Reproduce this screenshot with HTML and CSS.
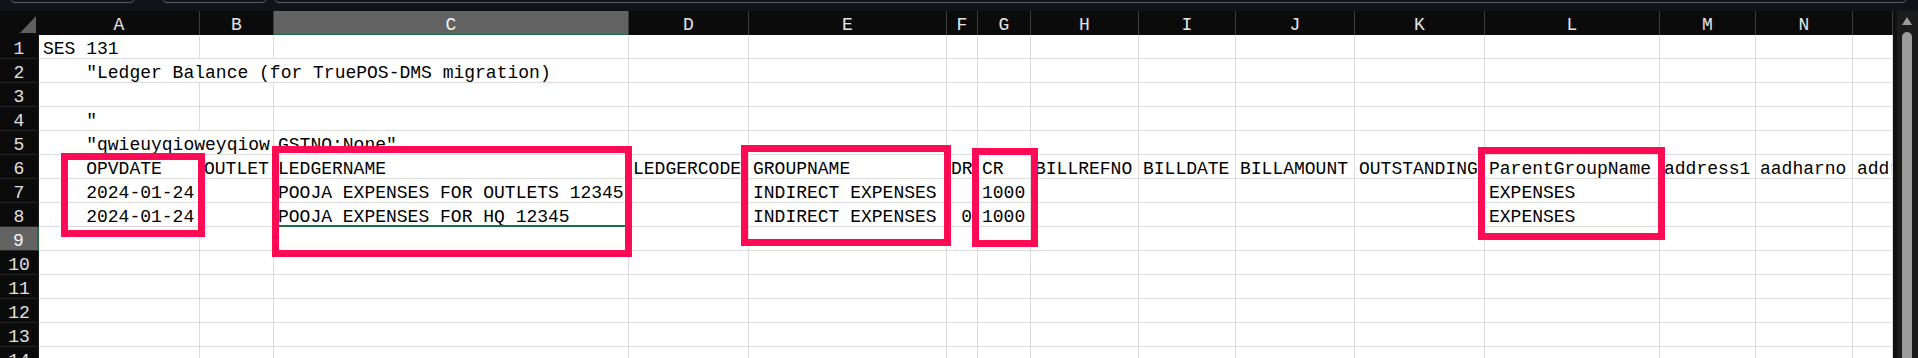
FILE: index.html
```
<!DOCTYPE html>
<html>
<head>
<meta charset="utf-8">
<link rel="stylesheet" href="styles.css">
</head>
<body>
<div class="topbar">
  <div class="tb tb1"></div>
  <div class="tb tb2"></div>
  <div class="tb tb3"></div>
</div>
<div class="main">
  <div class="sheet">
    <div class="row head">
      <div class="hd corner"><div class="tri"></div></div>
      <div class="hd">A</div><div class="hd">B</div><div class="hd sel">C</div><div class="hd">D</div><div class="hd">E</div><div class="hd">F</div><div class="hd">G</div><div class="hd">H</div><div class="hd">I</div><div class="hd">J</div><div class="hd">K</div><div class="hd">L</div><div class="hd">M</div><div class="hd">N</div><div class="hd"></div>
    </div>
    <div class="row">
      <div class="rh">1</div>
      <div class="c">SES 131</div><div class="c"></div><div class="c"></div><div class="c"></div><div class="c"></div><div class="c"></div><div class="c"></div><div class="c"></div><div class="c"></div><div class="c"></div><div class="c"></div><div class="c"></div><div class="c"></div><div class="c"></div><div class="c"></div>
    </div>
    <div class="row">
      <div class="rh">2</div>
      <div class="c span3">    "Ledger Balance (for TruePOS-DMS migration)</div><div class="c"></div><div class="c"></div><div class="c"></div><div class="c"></div><div class="c"></div><div class="c"></div><div class="c"></div><div class="c"></div><div class="c"></div><div class="c"></div><div class="c"></div><div class="c"></div>
    </div>
    <div class="row">
      <div class="rh">3</div>
      <div class="c"></div><div class="c"></div><div class="c"></div><div class="c"></div><div class="c"></div><div class="c"></div><div class="c"></div><div class="c"></div><div class="c"></div><div class="c"></div><div class="c"></div><div class="c"></div><div class="c"></div><div class="c"></div><div class="c"></div>
    </div>
    <div class="row">
      <div class="rh">4</div>
      <div class="c">    "</div><div class="c"></div><div class="c"></div><div class="c"></div><div class="c"></div><div class="c"></div><div class="c"></div><div class="c"></div><div class="c"></div><div class="c"></div><div class="c"></div><div class="c"></div><div class="c"></div><div class="c"></div><div class="c"></div>
    </div>
    <div class="row">
      <div class="rh">5</div>
      <div class="c span2">    "qwieuyqioweyqiow</div><div class="c">GSTNO:None"</div><div class="c"></div><div class="c"></div><div class="c"></div><div class="c"></div><div class="c"></div><div class="c"></div><div class="c"></div><div class="c"></div><div class="c"></div><div class="c"></div><div class="c"></div><div class="c"></div>
    </div>
    <div class="row">
      <div class="rh">6</div>
      <div class="c">    OPVDATE</div><div class="c">OUTLET</div><div class="c">LEDGERNAME</div><div class="c">LEDGERCODE</div><div class="c">GROUPNAME</div><div class="c">DR</div><div class="c">CR</div><div class="c">BILLREFNO</div><div class="c">BILLDATE</div><div class="c">BILLAMOUNT</div><div class="c">OUTSTANDING</div><div class="c">ParentGroupName</div><div class="c">address1</div><div class="c">aadharno</div><div class="c">address2</div>
    </div>
    <div class="row">
      <div class="rh">7</div>
      <div class="c">    2024-01-24</div><div class="c"></div><div class="c">POOJA EXPENSES FOR OUTLETS 12345</div><div class="c"></div><div class="c">INDIRECT EXPENSES</div><div class="c"></div><div class="c num">1000</div><div class="c"></div><div class="c"></div><div class="c"></div><div class="c"></div><div class="c">EXPENSES</div><div class="c"></div><div class="c"></div><div class="c"></div>
    </div>
    <div class="row">
      <div class="rh">8</div>
      <div class="c">    2024-01-24</div><div class="c"></div><div class="c">POOJA EXPENSES FOR HQ 12345</div><div class="c"></div><div class="c">INDIRECT EXPENSES</div><div class="c num">0</div><div class="c num">1000</div><div class="c"></div><div class="c"></div><div class="c"></div><div class="c"></div><div class="c">EXPENSES</div><div class="c"></div><div class="c"></div><div class="c"></div>
    </div>
    <div class="row">
      <div class="rh sel">9</div>
      <div class="c"></div><div class="c"></div><div class="c active"></div><div class="c"></div><div class="c"></div><div class="c"></div><div class="c"></div><div class="c"></div><div class="c"></div><div class="c"></div><div class="c"></div><div class="c"></div><div class="c"></div><div class="c"></div><div class="c"></div>
    </div>
    <div class="row">
      <div class="rh">10</div>
      <div class="c"></div><div class="c"></div><div class="c"></div><div class="c"></div><div class="c"></div><div class="c"></div><div class="c"></div><div class="c"></div><div class="c"></div><div class="c"></div><div class="c"></div><div class="c"></div><div class="c"></div><div class="c"></div><div class="c"></div>
    </div>
    <div class="row">
      <div class="rh">11</div>
      <div class="c"></div><div class="c"></div><div class="c"></div><div class="c"></div><div class="c"></div><div class="c"></div><div class="c"></div><div class="c"></div><div class="c"></div><div class="c"></div><div class="c"></div><div class="c"></div><div class="c"></div><div class="c"></div><div class="c"></div>
    </div>
    <div class="row">
      <div class="rh">12</div>
      <div class="c"></div><div class="c"></div><div class="c"></div><div class="c"></div><div class="c"></div><div class="c"></div><div class="c"></div><div class="c"></div><div class="c"></div><div class="c"></div><div class="c"></div><div class="c"></div><div class="c"></div><div class="c"></div><div class="c"></div>
    </div>
    <div class="row">
      <div class="rh">13</div>
      <div class="c"></div><div class="c"></div><div class="c"></div><div class="c"></div><div class="c"></div><div class="c"></div><div class="c"></div><div class="c"></div><div class="c"></div><div class="c"></div><div class="c"></div><div class="c"></div><div class="c"></div><div class="c"></div><div class="c"></div>
    </div>
    <div class="row">
      <div class="rh">14</div>
      <div class="c"></div><div class="c"></div><div class="c"></div><div class="c"></div><div class="c"></div><div class="c"></div><div class="c"></div><div class="c"></div><div class="c"></div><div class="c"></div><div class="c"></div><div class="c"></div><div class="c"></div><div class="c"></div><div class="c"></div>
    </div>
  </div>
  <div class="vscroll">
    <div class="arrow"></div>
    <div class="thumb"></div>
  </div>
</div>
<div class="mark mark-a"></div>
<div class="mark mark-c"></div>
<div class="mark mark-e"></div>
<div class="mark mark-g"></div>
<div class="mark mark-l"></div>
</body>
</html>
```
FILE: styles.css
```
* { box-sizing: border-box; margin: 0; padding: 0; }
html, body { width: 1918px; height: 358px; overflow: hidden; background: #111318; }
body { font-family: "Liberation Mono", "Courier New", monospace; font-size: 18px; position: relative; }

.topbar { height: 11px; display: flex; overflow: hidden; background: #111318; }
.tb { height: 14px; margin-top: -11px; border: 1px solid #5a5c60; border-radius: 5px; flex: none; }
.tb1 { margin-left: 10px; width: 125px; }
.tb2 { margin-left: 27px; width: 105px; }
.tb3 { margin-left: 7px; width: 1633px; }

.main { display: flex; height: 347px; }
.sheet { width: 1893px; flex: none; display: flex; flex-direction: column; overflow: hidden; }
.row {
  display: grid;
  grid-template-columns: 39px 161px 74px 355px 120px 198px 31px 53px 108px 97px 119px 130px 175px 96px 97px 40px;
  height: 24px; flex: none;
}

.hd {
  background: #0b0b0b; color: #e4e4e4; text-align: center;
  border-right: 1px solid #3c3c3c; border-bottom: 1px solid #858585;
  padding-top: 5px; line-height: 18px; white-space: pre;
}
.hd.sel { background: #626262; color: #f2f2f2; border-bottom: 2px solid #1e6e42; }
.corner { display: flex; justify-content: flex-end; align-items: flex-end; padding: 0 3px 2px 0; border-right: none; }
.tri { width: 16px; height: 17px; background: #5f5f5f; clip-path: polygon(100% 0, 100% 100%, 0 100%); }

.rh {
  background: #0b0b0b; color: #e0e0e0; text-align: center;
  border-bottom: 1px solid #262626; border-right: 1px solid #1a1a1a;
  padding-top: 5px; line-height: 18px;
}
.rh.sel { background: #636363; color: #f4f4f4; border-right: 2px solid #1e6e42; }

.c {
  background: #fff; color: #000;
  border-right: 1px solid #dcdcdc; border-bottom: 1px solid #dcdcdc;
  padding: 5px 4px 0 4px; line-height: 18px;
  white-space: pre; overflow: hidden;
}
.span2 { grid-column: span 2; }
.span3 { grid-column: span 3; }
.num { text-align: right; padding-right: 5px; }
.active { outline: 2px solid #1e6e42; outline-offset: 0; position: relative; z-index: 1; }

.vscroll {
  width: 25px; flex: none; background: #1c1c1c; border-left: 4px solid #101010;
  padding: 6px 0 0 5px; display: flex; flex-direction: column; gap: 7px;
}
.arrow { width: 10px; height: 8px; background: #9b9b9b; clip-path: polygon(50% 0, 100% 100%, 0 100%); flex: none; }
.thumb { width: 10px; flex: 1; background: #9b9b9b; border-radius: 5px 5px 0 0; }

.mark { position: absolute; border: 7px solid #ff0a54; z-index: 5; }
.mark-a { left: 61px; top: 153px; width: 144px; height: 84px; }
.mark-c { left: 272px; top: 146px; width: 360px; height: 111px; }
.mark-e { left: 741px; top: 145px; width: 210px; height: 101px; }
.mark-g { left: 972px; top: 148px; width: 66px; height: 99px; }
.mark-l { left: 1478px; top: 147px; width: 187px; height: 93px; }
```
